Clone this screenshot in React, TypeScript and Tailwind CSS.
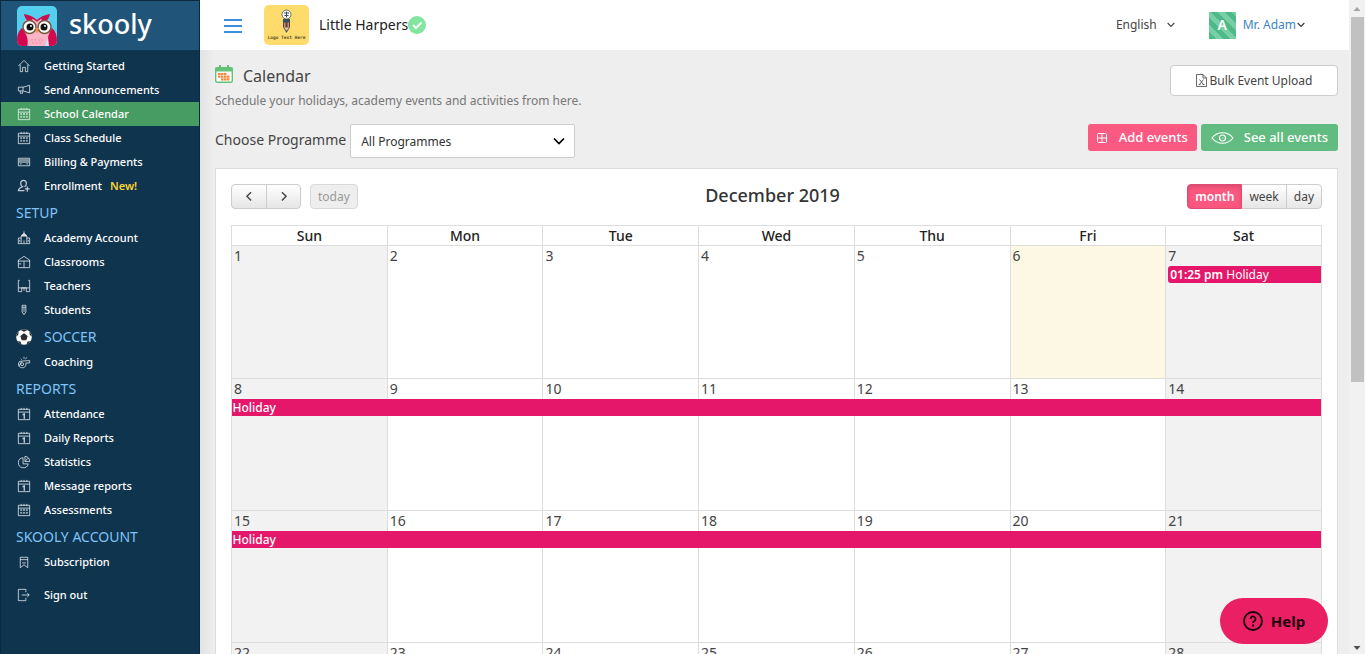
import type { ReactNode } from "react";

type IconName =
  | "home" | "horn" | "cal" | "card" | "user" | "school" | "room" | "desk"
  | "pencil" | "whistle" | "day" | "pie" | "mark" | "exit";

function dots() {
  return [5.5, 8.5, 11.5].flatMap((x) =>
    [8.5, 11.5].map((y) => <path key={x + "-" + y} d={`M${x - 1} ${y}h2`} strokeWidth="2" opacity=".75" />),
  );
}

const shapes: Record<IconName, ReactNode> = {
  home: <path d="M2.500 8.500 8.500 2.500l6 6M4.500 7v7.500H7V10h3v4.500h2.500V7" />,
  horn: <path d="M2.500 5.500h5l7-2v8l-7-2h-5zM7.500 5.500v4M4.500 9.500v2.500H7v-2" />,
  cal: <><path d="M2.500 3.500h12v11h-12zM2.500 6.500h12M5.500 2v2M8.500 2v2M11.500 2v2" />{dots()}</>,
  card: <><path d="M2.500 4.500h12v8h-12z" /><path d="M3 6.500h11M3 8.500h11" strokeWidth="2.200" opacity=".6" /><path d="M4 10.500h2M11 10.500h2" /></>,
  user: <path d="M8 2.500a3 3 0 0 1 3 3.300c0 1.600-1 3-2 3.500M8 2.500a3 3 0 0 0-3 3.300c0 1.600 1 3 2 3.500-2 1-4.500 1.500-4.500 4.200h6.500M12 9v5.500M9.500 11.500h5" strokeWidth="1.300" />,
  school: <><path d="M2.500 14V8.500h3M14.500 14V8.500h-3M5.500 14V7l3-3 3 3v7M2 14.500h13M8.500 14v-3M8.500 4V1.500M4 10.500v2M13 10.500v2" /><path d="M8.500 3.500 5.500 6.500h6z" fill="currentColor" /></>,
  room: <path d="M2.500 6.500 8.500 2.500l6 4v8h-12zM2 7.500h13M8.500 7.500v7M2.500 10.500h3" />,
  desk: <path d="M4 2.500H2.500v12h3.500v-4h5v4h3.500v-12H13M2.500 10.500h12M8.500 10.500v3" />,
  pencil: <path d="M6.500 3.500h4v7l-2 3-2-3zM6.500 5.500h4M8.500 5.500v5" />,
  whistle: <><path d="M2.500 10.500a3.500 3.500 0 0 1 4-3l8-.5v2.500h-4c.5 4-2 5.500-4.500 5-2 0-3.500-2-3.500-4z" /><circle cx="6.500" cy="10.800" r="1.600" /><path d="M5 5 6 6M8.500 3v2M11.500 3.500 10 5.500M3 13l3-5" /></>,
  day: <><path d="M2.500 3.500h12v11h-12zM2.500 6.500h12M5.500 2v2M8.500 2v2M11.500 2v2" /><path d="M7 9.300 8.800 8.500v5" strokeWidth="1.500" /></>,
  pie: <path d="M7.500 4a5.300 5.300 0 1 0 5.500 6.500H7.500zM9.500 2.500V8h5a5.200 5.200 0 0 0-5-5.500zM10 7.500 12.500 4.500" />,
  mark: <path d="M4.500 3.500h8v11l-4-3-4 3zM4.500 6h8M6.500 9.500h4" />,
  exit: <path d="M10.500 5.500v-3h-8v12h8v-3M6 8.500h8M12 6.500l2 2-2 2" />,
};

function Icon({ name }: { name: IconName }) {
  return (
    <svg viewBox="0 0 17 17" className="size-4 shrink-0 text-white/75" fill="none" stroke="currentColor" aria-hidden="true">
      {shapes[name]}
    </svg>
  );
}

function Ball() {
  return (
    <svg viewBox="0 0 16 16" className="size-4 shrink-0" aria-hidden="true">
      <circle cx="8" cy="8" r="7.800" fill="#fff" />
      <path d="M8 4.200 11.700 7 10.300 11.200H5.700L4.300 7zM4.500 1 8 2.700 11.500 1A8 8 0 0 0 4.500 1zM.3 7.500 2.200 6l.6-3.500A8 8 0 0 0 .3 7.500zM15.700 7.500 13.800 6l-.6-3.500a8 8 0 0 1 2.500 5zM1.500 12.200l3 .3 1 3A8 8 0 0 1 1.500 12.200zM14.500 12.200l-3 .3-1 3a8 8 0 0 0 4-3.300z" fill="#2c2c2c" />
    </svg>
  );
}

function Owl() {
  return (
    <svg viewBox="0 0 40 40" className="size-10 shrink-0" aria-hidden="true">
      <clipPath id="owl-clip"><rect width="40" height="40" rx="5" /></clipPath>
      <g clipPath="url(#owl-clip)">
        <rect width="40" height="40" fill="#55cfee" />
        <path d="M8 14C5 26 8 36 12 40h17c5-5 6-15 3-26z" fill="#fbb5c6" />
        <path d="M5 22C0 26-1 34 1 40h9c2-5 0-12-5-18zM35 22c5 4 6 13 4 18h-8c-1-6 0-12 4-18z" fill="#d6064f" />
        <path d="M31 31l1 9h-4z" fill="#c7e8f6" />
        <path d="M7 8c6 1 10 3 13 6 3-3 7-5 13-6-1 5-4 8-7 9l-6-1-6 1C11 16 8 13 7 8z" fill="#c9104f" />
        <path d="M15 13c2 0 4 2 5 3 1-1 3-3 5-3l-5 12z" fill="#fbb5c6" />
        <circle cx="12.500" cy="21" r="6.500" fill="#fff" stroke="#795842" strokeWidth="1.500" />
        <circle cx="27.500" cy="21" r="6.500" fill="#fff" stroke="#795842" strokeWidth="1.500" />
        <circle cx="13" cy="21" r="3.500" fill="#111" />
        <circle cx="27" cy="21" r="3.500" fill="#111" />
        <circle cx="14" cy="20" r="1" fill="#fff" />
        <circle cx="28" cy="20" r="1" fill="#fff" />
        <path d="M18 22h4l-2 6z" fill="#f58a3c" />
        <path d="M14 34h12M15 37h11" stroke="#e889a5" strokeDasharray="2 1.500" />
      </g>
    </svg>
  );
}

type Entry = { label: string; icon: IconName; active?: boolean; badge?: string };
const groups: { title?: string; ball?: boolean; items: Entry[] }[] = [
  {
    items: [
      { label: "Getting Started", icon: "home" },
      { label: "Send Announcements", icon: "horn" },
      { label: "School Calendar", icon: "cal", active: true },
      { label: "Class Schedule", icon: "cal" },
      { label: "Billing & Payments", icon: "card" },
      { label: "Enrollment", icon: "user", badge: "New!" },
    ],
  },
  {
    title: "SETUP",
    items: [
      { label: "Academy Account", icon: "school" },
      { label: "Classrooms", icon: "room" },
      { label: "Teachers", icon: "desk" },
      { label: "Students", icon: "pencil" },
    ],
  },
  { title: "SOCCER", ball: true, items: [{ label: "Coaching", icon: "whistle" }] },
  {
    title: "REPORTS",
    items: [
      { label: "Attendance", icon: "day" },
      { label: "Daily Reports", icon: "day" },
      { label: "Statistics", icon: "pie" },
      { label: "Message reports", icon: "day" },
      { label: "Assessments", icon: "cal" },
    ],
  },
  { title: "SKOOLY ACCOUNT", items: [{ label: "Subscription", icon: "mark" }] },
];

function NavItem({ item }: { item: Entry }) {
  return (
    <a href="#" className={`flex h-6 items-center gap-3 pl-[15px] text-[11px] font-medium text-white ${item.active ? "bg-[#479c63]" : ""}`}>
      <Icon name={item.icon} />
      <span>{item.label}</span>
      {item.badge && <span className="-ml-1 font-semibold text-[#fdd331]">{item.badge}</span>}
    </a>
  );
}

function Sidebar() {
  return (
    <aside className="flex w-[200px] shrink-0 flex-col border-x border-[#0b2a42] bg-[#0f344e]">
      <a href="#" className="flex h-[50px] shrink-0 items-center gap-3 border-t border-[#0b2a42] bg-[#205579] pl-4 text-[27px] leading-8 font-medium text-white">
        <Owl />
        <span className="pb-1">skooly</span>
      </a>
      <nav className="pt-1">
        {groups.map((g, i) => (
          <section key={i}>
            {g.title && (
              <h2 className="flex h-7 items-center gap-3 pt-0.5 pl-[15px] text-sm text-[#80c3f7]">
                {g.ball && <Ball />}
                {g.title}
              </h2>
            )}
            {g.items.map((it) => <NavItem key={it.label} item={it} />)}
          </section>
        ))}
        <div className="pt-[9px]">
          <NavItem item={{ label: "Sign out", icon: "exit" }} />
        </div>
      </nav>
    </aside>
  );
}

function Chevron({ className }: { className: string }) {
  return (
    <svg viewBox="0 0 12 8" className={className} fill="none" stroke="currentColor" strokeWidth="1.700" aria-hidden="true">
      <path d="M1 1.500 6 6.500l5-5" />
    </svg>
  );
}

function ClubLogo() {
  return (
    <svg viewBox="0 0 45 40" className="h-10 w-[45px]" role="img" aria-label="Logo">
      <rect width="45" height="40" rx="5" fill="#ffdb6b" />
      <circle cx="22.500" cy="9.500" r="4.500" fill="#fff" stroke="#37505c" strokeWidth=".8" />
      <path d="M20 8h5M22.500 6.500v6M20.500 10.500h4" stroke="#37505c" />
      <path d="M19 14h7v8l-3.500 6L19 22z" fill="#37505c" />
      <path d="M20 17.500h1.500v5H20zM23.500 17.500H25v5h-1.500z" fill="#f0805a" />
      <path d="M20 22.500h5L22.500 26z" fill="#f3c2a0" />
      <text x="22.500" y="34" textAnchor="middle" fontSize="4.500" fontWeight="bold" fontFamily="DejaVu Sans Mono" fill="#5a532f">Logo Text Here</text>
    </svg>
  );
}

function Header() {
  return (
    <header className="flex h-[50px] shrink-0 items-center bg-white pr-11 pl-6">
      <button type="button" aria-label="Toggle menu" className="flex w-[18px] flex-col gap-1 pt-0.5">
        <span className="h-0.5 w-full bg-[#3c8fe0]" />
        <span className="h-0.5 w-full bg-[#3c8fe0]" />
        <span className="h-0.5 w-full bg-[#3c8fe0]" />
      </button>
      <div className="ml-[22px] flex items-center">
        <ClubLogo />
        <span className="ml-2.5 text-sm text-[#222]">Little Harpers</span>
        <svg viewBox="0 0 18 18" className="size-[18px]" aria-hidden="true">
          <circle cx="9" cy="9" r="9" fill="#82e6a0" />
          <path d="m5 9 3 3 5.500-5.500" fill="none" stroke="#fff" strokeWidth="2" />
        </svg>
      </div>
      <button type="button" className="ml-auto flex items-center gap-2.5 text-xs text-[#444]">
        English
        <Chevron className="w-2" />
      </button>
      <button type="button" className="ml-[34px] flex items-center text-xs text-[#3d85c6]">
        <span className="mr-[7px] flex size-[27px] items-center justify-center bg-[repeating-linear-gradient(45deg,#4fba89_0_5px,#78cfa5_5px_10px)] text-sm font-semibold text-white">A</span>
        <span className="pr-px">Mr. Adam</span>
        <Chevron className="w-2 text-[#333]" />
      </button>
    </header>
  );
}

function CalendarGlyph() {
  return (
    <svg viewBox="0 0 18 18" className="size-[18px] shrink-0" aria-hidden="true">
      <rect x=".7" y="2.700" width="16.600" height="14.600" rx="1.500" fill="#fff" stroke="#65c178" strokeWidth="1.400" />
      <path d="M.5 2.500h17V6.500H.5zM4 0h2v3H4zM12 0h2v3h-2z" fill="#65c178" />
      <path d="M3 9h9M3 11.700h12M6 14.400h9" stroke="#f58838" strokeWidth="2.200" strokeDasharray="2.500 .5" />
    </svg>
  );
}

const days = ["Sun", "Mon", "Tue", "Wed", "Thu", "Fri", "Sat"];
const weeks = [0, 1, 2, 3, 4];

function MonthGrid() {
  return (
    <table className="mt-4 w-full table-fixed border-collapse">
      <thead>
        <tr>
          {days.map((d) => (
            <th key={d} scope="col" className="h-5 border border-[#ddd] p-0 text-sm leading-[19px] font-medium text-[#222]">{d}</th>
          ))}
        </tr>
      </thead>
      <tbody>
        {weeks.map((w) => (
          <tr key={w} className="relative">
            {days.map((d, i) => {
              const n = w * 7 + i + 1;
              const tone = n === 6 ? "bg-[#fcf8e3]" : i === 0 || i === 6 ? "bg-[#f2f2f2]" : "bg-white";
              return (
                <td key={d} className={`border border-[#ddd] p-0 align-top ${w === 0 ? "h-[133px]" : "h-[132px]"} ${tone}`}>
                  <div className="px-0.5 text-sm leading-5 text-[#444]">{n > 31 ? n - 31 : n}</div>
                  {n === 7 && (
                    <a href="#" className="ml-0.5 block h-[17px] rounded-l-[3px] bg-[#e5176a] px-0.5 text-xs leading-[17px] text-white">
                      <b className="font-semibold">01:25 pm</b> Holiday
                    </a>
                  )}
                  {i === 0 && (w === 1 || w === 2) && (
                    <a href="#" className="absolute top-5 right-px left-0 h-[17px] bg-[#e5176a] px-px text-xs leading-[17px] font-medium text-white">Holiday</a>
                  )}
                </td>
              );
            })}
          </tr>
        ))}
      </tbody>
    </table>
  );
}

const softButton = "h-[25px] border border-[#ccc] bg-linear-to-b from-white to-[#e6e6e6] text-[#444]";

function Toolbar() {
  return (
    <div className="flex items-center justify-between">
      <div className="flex items-center gap-[9px]">
        <div className="flex">
          <button type="button" aria-label="Previous month" className={`flex w-9 items-center justify-center rounded-l ${softButton}`}>
            <Chevron className="w-2.5 rotate-90" />
          </button>
          <button type="button" aria-label="Next month" className={`-ml-px flex w-[35px] items-center justify-center rounded-r ${softButton}`}>
            <Chevron className="w-2.5 -rotate-90" />
          </button>
        </div>
        <button type="button" className="h-[25px] rounded border border-[#d8d8d8] bg-[#eee] px-[7px] text-xs text-[#999]">today</button>
      </div>
      <h2 className="pb-[3px] text-lg leading-[22px] font-medium text-[#333]">December 2019</h2>
      <div className="flex text-xs">
        <button type="button" className="h-[25px] rounded-l border border-[#e04a72] bg-[#fc587f] px-[7px] font-semibold text-white shadow-[inset_0_2px_4px_rgba(0,0,0,0.15)]">month</button>
        <button type="button" className={`border-l-0 px-[7px] ${softButton}`}>week</button>
        <button type="button" className={`-ml-px rounded-r px-[7px] ${softButton}`}>day</button>
      </div>
    </div>
  );
}

function Scrollbar() {
  return (
    <div aria-hidden="true" className="flex w-4 shrink-0 flex-col items-center bg-[#f1f1f1]">
      <svg viewBox="0 0 16 17" className="h-[17px] w-4"><path d="M4.500 11 8 7l3.500 4z" fill="#a3a3a3" /></svg>
      <div className="h-[365px] w-[13px] bg-[#c1c1c1]" />
      <svg viewBox="0 0 16 17" className="mt-auto h-[17px] w-4"><path d="M4.500 9 8 13l3.500-4z" fill="#505050" /></svg>
    </div>
  );
}

export default function App() {
  return (
    <div className="relative flex h-screen overflow-hidden bg-[#eee] font-['Noto_Sans',sans-serif]">
      <Sidebar />
      <div className="flex min-w-0 flex-1 flex-col">
        <Header />
        <main className="min-h-0 flex-1 overflow-hidden bg-[linear-gradient(to_right,#e2e2e2,#eee_14px)] pt-[15px] pr-[11px] pl-[15px]">
          <div className="flex items-start justify-between">
            <div>
              <h1 className="flex items-start gap-2.5 text-base leading-[22px] text-[#444]">
                <CalendarGlyph />
                Calendar
              </h1>
              <p className="mt-1 text-xs leading-5 text-[#777]">Schedule your holidays, academy events and activities from here.</p>
            </div>
            <button type="button" className="flex h-[31px] w-[168px] items-center justify-center gap-[3px] rounded border border-[#ccc] bg-white text-xs text-[#444]">
              <svg viewBox="0 0 11 13" className="h-[13px] w-[11px]" fill="none" stroke="currentColor" strokeWidth=".8" aria-hidden="true">
                <path d="M.5.5H7L10.500 4v8.500H.5zM7 .5V4h3.500M3.500 5.500l4 5M7.500 5.500l-4 5M2.500 10.500h2M6.500 10.500h2" />
              </svg>
              Bulk Event Upload
            </button>
          </div>
          <div className="mt-[13px] flex items-start justify-between">
            <div className="flex items-center gap-1">
              <label htmlFor="programme" className="pb-0.5 text-sm text-[#444]">Choose Programme</label>
              <div className="relative">
                <select id="programme" className="h-[34px] w-[225px] appearance-none rounded-xs border border-[#ccc] bg-white pt-0.5 pl-[10px] text-xs text-[#333]">
                  <option>All Programmes</option>
                </select>
                <Chevron className="pointer-events-none absolute top-[13px] right-2.5 w-3 text-black" />
              </div>
            </div>
            <div className="flex gap-1 text-[13px] font-medium text-white">
              <button type="button" className="flex h-[27px] items-center gap-3 rounded-[3px] bg-[#fa5a82] px-[9px]">
                <svg viewBox="0 0 10 10" className="size-2.5" fill="none" stroke="currentColor" aria-hidden="true">
                  <rect x=".5" y=".5" width="9" height="9" rx="1" /><path d="M5 1v8M1 5h8" />
                </svg>
                Add events
              </button>
              <button type="button" className="flex h-[27px] items-center gap-2.5 rounded-[3px] bg-[#62bb80] px-2.5">
                <svg viewBox="0 0 23 12" className="h-3 w-[23px]" fill="none" stroke="currentColor" strokeWidth="1.200" aria-hidden="true">
                  <path d="M1 6c5.500-7 15.500-7 21 0-5.500 7-15.500 7-21 0z" /><circle cx="11.500" cy="6" r="3" /><path d="M11.500 6h1" />
                </svg>
                See all events
              </button>
            </div>
          </div>
          <section className="mt-2.5 border border-[#ddd] bg-white p-[15px]">
            <Toolbar />
            <MonthGrid />
          </section>
        </main>
      </div>
      <Scrollbar />
      <button type="button" className="absolute right-[37px] bottom-2.5 flex h-[46px] w-[108px] items-center justify-center gap-2 rounded-full bg-[#eb1f64] text-[15px] font-bold text-black/90">
        <svg viewBox="0 0 20 20" className="size-5" fill="none" stroke="currentColor" strokeWidth="1.800" aria-hidden="true">
          <circle cx="10" cy="10" r="9" /><path d="M7.500 8a2.500 2.500 0 1 1 3.800 2.100c-.8.500-1.300.9-1.300 1.900M10 13.500v2" />
        </svg>
        Help
      </button>
    </div>
  );
}
